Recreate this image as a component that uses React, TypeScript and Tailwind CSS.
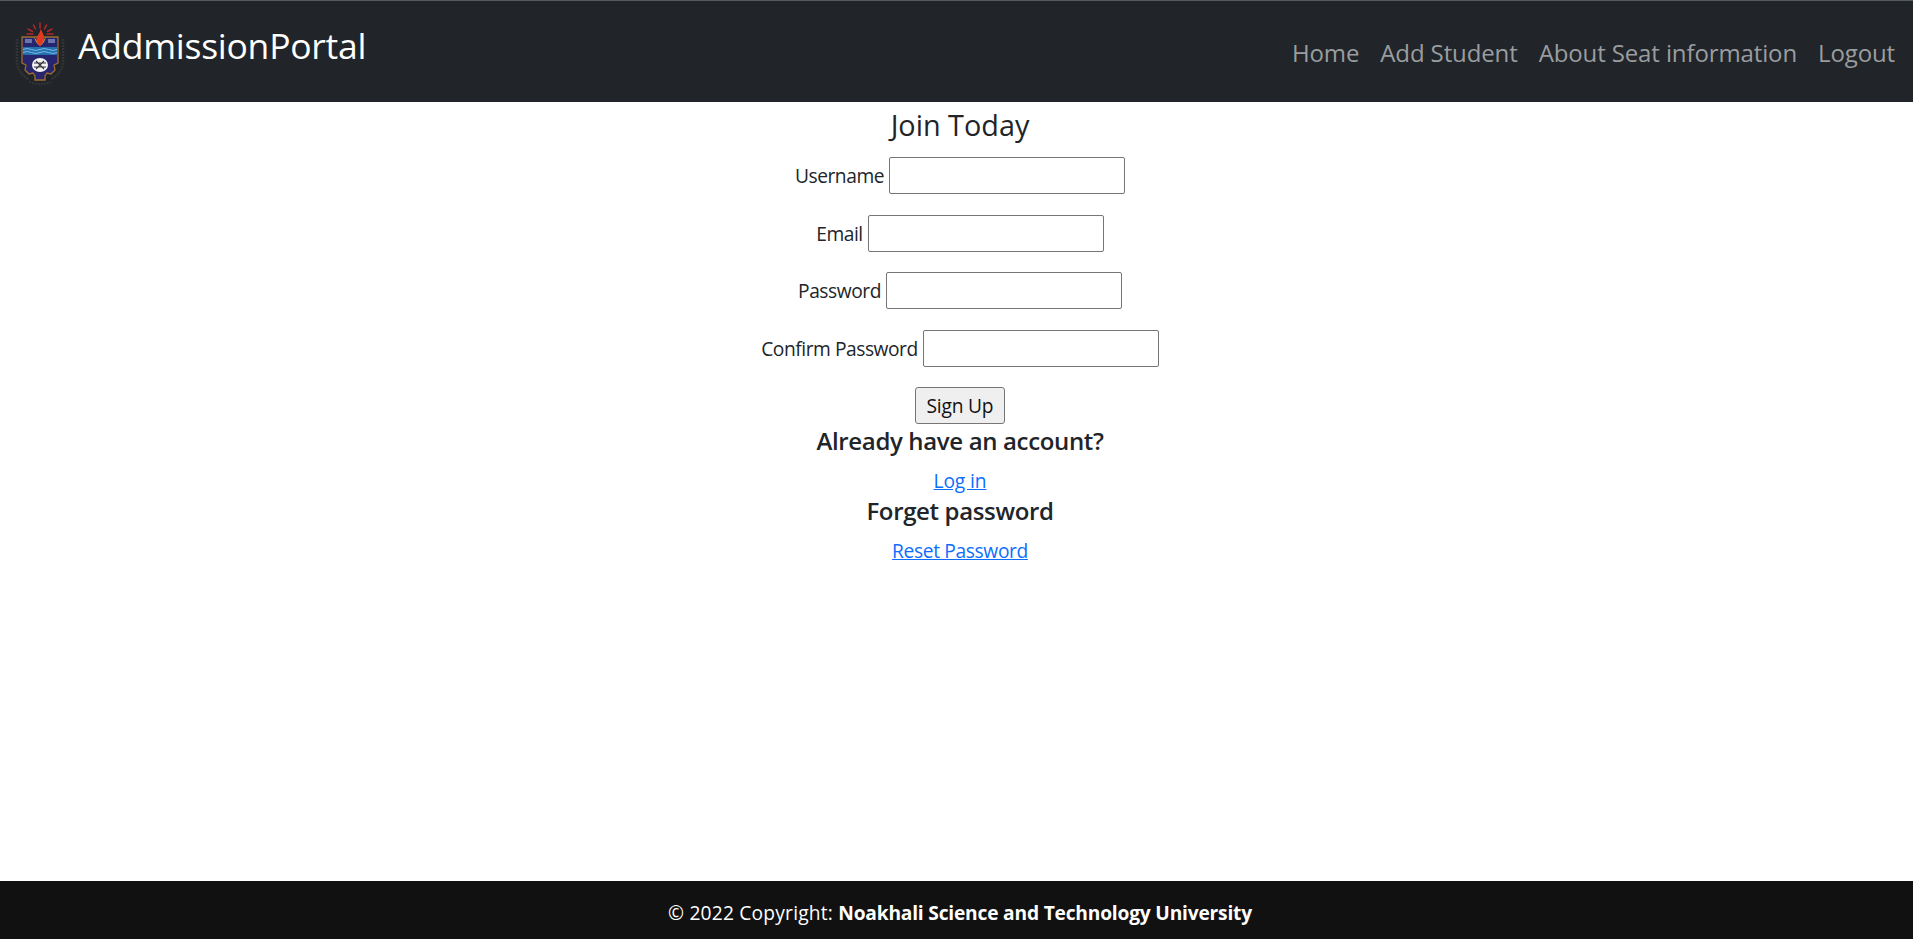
import React from 'react';

// --- Data ---
const navLinks = ['Home', 'Add Student', 'About Seat information', 'Logout'];

const fields = [
  { label: 'Username', type: 'text' },
  { label: 'Email', type: 'email' },
  { label: 'Password', type: 'password' },
  { label: 'Confirm Password', type: 'password' },
];

const font = "font-['Open_Sans','Noto_Sans',sans-serif]";

// --- Logo ---
const Crest: React.FC = () => (
  <svg width="50" height="66" viewBox="0 0 50 66" className="shrink-0">
    {/* rays */}
    <g stroke="#b3262a" strokeWidth="1.5" strokeLinecap="round">
      <path d="M25 3v5" />
      <path d="M18.5 5l2 4" />
      <path d="M31.5 5l-2 4" />
      <path d="M13 9l4.5 2.5" />
      <path d="M37 9l-4.5 2.5" />
      <path d="M12 14h6" />
      <path d="M38 14h-6" />
    </g>
    {/* lettering ring */}
    <path d="M2 19v23c0 7 5 13 11 17" stroke="#333436" strokeWidth="2.5" fill="none" strokeDasharray="2 1" />
    <path d="M48 19v23c0 7-5 13-11 17" stroke="#333436" strokeWidth="2.5" fill="none" strokeDasharray="2 1" />
    <path d="M14 62q11 4 22 0" stroke="#333436" strokeWidth="2" fill="none" strokeDasharray="2 1" />
    {/* shield */}
    <path
      d="M7 17h36v26l-4 2 1 5-4 4-4-1-2 3v4h-10v-4l-2-3-4 1-4-4 1-5-4-2z"
      fill="#28256f"
      stroke="#9c6c2c"
      strokeWidth="1.3"
    />
    {/* water */}
    <rect x="8" y="27" width="34" height="8" fill="#2470ae" />
    <path d="M8 29.5q4-2 8.5 0t8.5 0 8.5 0 8.5 0M8 32.5q4-2 8.5 0t8.5 0 8.5 0 8.5 0" stroke="#7cbce6" strokeWidth="1" fill="none" />
    {/* flame */}
    <path d="M19 17c1 4 3 7 6 9 3-2 5-5 6-9-2 3-4 5-6 6-2-1-4-3-6-6z" fill="#c99a3e" />
    <path d="M25.5 9c2.5 4 4 7 3.5 10-.5 3-2.5 5-4 7-2-2-3.5-4-3.5-7 0-3 3.5-5 4-10z" fill="#e5391f" />
    {/* labels */}
    <rect x="10" y="19" width="7" height="4" fill="#7f8fbf" opacity="0.75" />
    <rect x="33" y="19" width="7" height="4" fill="#7f8fbf" opacity="0.75" />
    {/* seal */}
    <ellipse cx="25" cy="45" rx="8" ry="7" fill="#f2f2f2" />
    <path d="M19 43h12M19 47h12M21 41l8 8M29 41l-8 8" stroke="#33343a" strokeWidth="1.1" />
  </svg>
);

// --- Sections ---
const Header: React.FC = () => (
  <nav className="h-[102px] shrink-0 border-t border-[#555a5e] bg-[#212529] flex justify-between pl-[15px] pr-[18px]">
    <a href="#" className="flex items-start pt-[19px] gap-[13px] text-white">
      <Crest />
      <span className="text-[35.5px] leading-[50px] tracking-[-0.25px]">AddmissionPortal</span>
    </a>
    <ul className="flex gap-[21px] pt-[34px]">
      {navLinks.map((link) => (
        <li key={link}>
          <a href="#" className="text-[24px] leading-[36px] tracking-[-0.12px] text-[#9a9da0]">
            {link}
          </a>
        </li>
      ))}
    </ul>
  </nav>
);

const SignupForm: React.FC = () => (
  <main className="flex-1 flex flex-col items-center pl-[7px] text-[#212529] text-[19.2px] leading-[28.8px] tracking-[-0.45px]">
    <h2 className="text-[28.8px] leading-[34.5px] mt-[6px] mb-[14.5px] tracking-[0px]">Join Today</h2>
    <form className="flex flex-col items-center">
      {fields.map((field) => (
        <p key={field.label} className="mb-[20.5px] flex items-center gap-[5px]">
          <label className="pt-[2px]">{field.label}</label>
          <input
            type={field.type}
            className="w-[236px] h-[37px] bg-white border border-[#767676] rounded-[2px]"
          />
        </p>
      ))}
      <button
        type="button"
        className="w-[90px] h-[37px] bg-[#efefef] border border-[#767676] rounded-[3px] text-[#111] pt-[1px] tracking-[-0.2px]"
      >
        Sign Up
      </button>
    </form>
    <h5 className="text-[24px] leading-[29px] font-semibold mt-[2px] mb-[12px] tracking-[-0.35px]">Already have an account?</h5>
    <a href="#" className="text-[#0d6efd] underline tracking-[-0.1px]">Log in</a>
    <h5 className="text-[24px] leading-[29px] font-semibold mb-[12px] tracking-[-0.35px]">Forget password</h5>
    <a href="#" className="text-[#0d6efd] underline tracking-[-0.35px]">Reset Password</a>
  </main>
);

const Footer: React.FC = () => (
  <footer className="h-[58px] shrink-0 bg-[#111111] text-white flex items-center justify-center pl-[7px] pt-[7px] text-[19.2px]">
    <span className="tracking-[0.2px]">
      © 2022 Copyright: <a href="#" className="font-bold text-white tracking-[-0.2px]">Noakhali Science and Technology University</a>
    </span>
  </footer>
);

export default function App() {
  return (
    <div className={`h-[939px] flex flex-col bg-white overflow-hidden ${font}`}>
      <Header />
      <SignupForm />
      <Footer />
    </div>
  );
}
